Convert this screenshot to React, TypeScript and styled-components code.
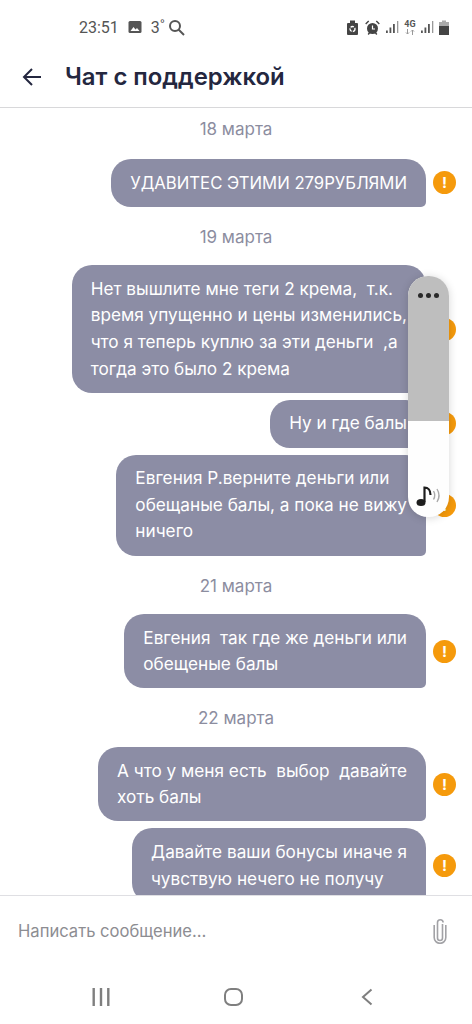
import styled, { createGlobalStyle } from "styled-components";

const GlobalStyle = createGlobalStyle`
  html, body {
    margin: 0;
    padding: 0;
    background: #fff;
    font-family: Inter, "Noto Sans", sans-serif;
  }
`;

const Screen = styled.div`
  position: relative;
  width: 472px;
  height: 1024px;
  display: flex;
  flex-direction: column;
  overflow: hidden;
  background: #fff;
`;

const StatusBar = styled.div`
  height: 54px;
  flex: none;
  display: flex;
  align-items: center;
  justify-content: space-between;
  padding: 0 23px 0 79px;
  color: #555;
`;

const StatusGroup = styled.div`
  display: flex;
  align-items: center;
`;

const Clock = styled.span`
  font-family: Roboto, sans-serif;
  font-size: 16px;
  margin-right: 9px;
`;

const Temp = styled.span`
  font-family: Roboto, sans-serif;
  font-size: 16px;
  margin: 0 3px 0 9px;
`;

const NetworkType = styled.div`
  width: 10px;
  display: flex;
  flex-direction: column;
  align-items: center;
  margin: 0 6px;
  font-family: Roboto, sans-serif;
  font-size: 9px;
  font-weight: 700;
  line-height: 9px;
  color: #555;
`;

const Header = styled.header`
  height: 54px;
  flex: none;
  display: flex;
  align-items: center;
  padding: 0 0 8px 22px;
  box-sizing: border-box;
  border-bottom: 1px solid #d8d8da;
`;

const BackButton = styled.div`
  width: 21px;
  height: 20px;
  margin-right: 22px;
  color: #24273f;
`;

const Title = styled.h1`
  margin: 0;
  font-size: 23.9px;
  font-weight: 600;
  color: #24273f;
`;

const Messages = styled.div`
  flex: 1;
  min-height: 0;
  overflow: hidden;
  display: flex;
  flex-direction: column;
`;

const DateLabel = styled.div`
  flex: none;
  height: 18px;
  line-height: 18px;
  padding: 14px 0 19.5px;
  text-align: center;
  font-size: 17px;
  color: #8c8d9f;

  &:first-child {
    padding: 12px 0 21px;
  }
`;

const Row = styled.div`
  flex: none;
  display: flex;
  justify-content: flex-end;
  align-items: center;
  gap: 7px;
  padding-right: 16px;
  margin-bottom: 7px;
`;

const Bubble = styled.div<{ $caps?: boolean }>`
  box-sizing: border-box;
  background: #8c8da5;
  color: #fff;
  font-size: ${(props) => (props.$caps ? "16.7px" : "17.2px")};
  line-height: 26.6px;
  padding: 10.6px 19px;
  border-radius: 20px 20px 5px 20px;
  white-space: pre;
`;

const WarningIcon = styled.div`
  width: 23px;
  height: 23px;
  flex: none;
  border-radius: 50%;
  background: #f59a0c;
  color: #fff;
  display: flex;
  align-items: center;
  justify-content: center;
  font-size: 15px;
  font-weight: 700;
`;

const Composer = styled.div`
  height: 70px;
  flex: none;
  box-sizing: border-box;
  display: flex;
  align-items: center;
  justify-content: space-between;
  padding: 1px 25px 0 18px;
  border-top: 1px solid #dfdfe3;
  background: #fff;
`;

const Placeholder = styled.span`
  font-size: 16.6px;
  color: #8d8d92;
`;

const NavBar = styled.nav`
  height: 59px;
  flex: none;
  display: grid;
  grid-template-columns: repeat(3, 133px);
  justify-items: center;
  align-items: center;
  padding: 5px 0 0 34px;
  box-sizing: border-box;
  color: #7f7f7f;
`;

const VolumePanel = styled.div`
  position: absolute;
  left: 408px;
  top: 276px;
  width: 41px;
  height: 241px;
  border-radius: 20px;
  overflow: hidden;
  background: #fefefe;
  box-shadow: 0 1px 8px rgba(0, 0, 0, 0.16);
  display: flex;
  flex-direction: column;
`;

const VolumeLevel = styled.div`
  height: 145px;
  flex: none;
  background: #bebebe;
  display: flex;
  justify-content: center;
  padding-top: 17px;
  box-sizing: border-box;
  gap: 3px;
`;

const Dot = styled.span`
  width: 5px;
  height: 5px;
  border-radius: 50%;
  background: #2a2a2a;
`;

const VolumeBottom = styled.div`
  flex: 1;
  display: flex;
  align-items: flex-end;
  justify-content: center;
  padding-bottom: 10px;
`;

type MessageItem = { date: string } | { text: string; caps?: boolean };

const items: MessageItem[] = [
  { date: "18 марта" },
  { text: "УДАВИТЕС ЭТИМИ 279РУБЛЯМИ", caps: true },
  { date: "19 марта" },
  {
    text: "Нет вышлите мне теги 2 крема,  т.к.\nвремя упущенно и цены изменились,\nчто я теперь куплю за эти деньги  ,а\nтогда это было 2 крема",
  },
  { text: "Ну и где балы" },
  { text: "Евгения Р.верните деньги или\nобещаные балы, а пока не вижу\nничего" },
  { date: "21 марта" },
  { text: "Евгения  так где же деньги или\nобещеные балы" },
  { date: "22 марта" },
  { text: "А что у меня есть  выбор  давайте\nхоть балы" },
  { text: "Давайте ваши бонусы иначе я\nчувствую нечего не получу" },
];

function SignalIcon() {
  return (
    <svg width="13" height="14" viewBox="0 0 13 14">
      <rect x="0" y="10.500" width="1.800" height="2.500" fill="#555" />
      <rect x="3.500" y="7.500" width="1.800" height="5.500" fill="#555" />
      <rect x="7" y="4" width="1.800" height="9" fill="#555" />
      <rect x="11" y="1" width="1.300" height="12" fill="#999" />
    </svg>
  );
}

function App() {
  return (
    <Screen>
      <GlobalStyle />
      <StatusBar>
        <StatusGroup>
          <Clock>23:51</Clock>
          <svg width="14" height="14" viewBox="0 0 14 14">
            <rect x="0.5" y="1" width="13" height="12" rx="1.500" fill="#555" />
            <path d="M2.500 11l3-4 2 2.500 1.500-1.500 2.500 3z" fill="#fff" />
          </svg>
          <Temp>3˚</Temp>
          <svg width="17" height="17" viewBox="0 0 17 17" fill="none" stroke="#555" strokeWidth="2">
            <circle cx="7" cy="7" r="5" />
            <path d="M10.500 10.500L16 16" />
          </svg>
        </StatusGroup>
        <StatusGroup>
          <svg width="11" height="15" viewBox="0 0 11 15" style={{ marginRight: 7 }}>
            <path d="M3 0.500h5v2.500h2a1 1 0 0 1 1 1v10a1 1 0 0 1-1 1H1a1 1 0 0 1-1-1V4a1 1 0 0 1 1-1h2z" fill="#444" />
            <circle cx="5.500" cy="9" r="2.500" fill="none" stroke="#fff" strokeWidth="1.300" strokeDasharray="3.500 1.200" />
          </svg>
          <svg width="15" height="15" viewBox="0 0 15 15" style={{ marginRight: 6 }}>
            <circle cx="7.500" cy="8.500" r="5.500" fill="#444" />
            <path d="M0.700 4l3-3M14.300 4l-3-3M3.200 14.500l1.500-2M11.800 14.500l-1.500-2" stroke="#444" strokeWidth="1.400" />
            <path d="M7.500 5.500v3.500h2.500" stroke="#fff" strokeWidth="1.200" fill="none" />
          </svg>
          <SignalIcon />
          <NetworkType>
            4G
            <svg width="10" height="6" viewBox="0 0 10 6" fill="none" stroke="#999" strokeWidth="1">
              <path d="M2.500 0v5M1 3.500L2.500 5 4 3.500M7.500 6V1M6 2.500L7.500 1 9 2.500" />
            </svg>
          </NetworkType>
          <SignalIcon />
          <svg width="10" height="15" viewBox="0 0 10 15" style={{ marginLeft: 5 }}>
            <path d="M3 0.500h4V2h3v13H0V2h3z" fill="#aaa" />
            <rect x="0" y="6" width="10" height="9" fill="#444" />
          </svg>
        </StatusGroup>
      </StatusBar>

      <Header>
        <BackButton>
          <svg width="21" height="20" viewBox="0 0 21 20" fill="none" stroke="currentColor" strokeWidth="2">
            <path d="M19 10H2M10 2l-8 8 8 8" />
          </svg>
        </BackButton>
        <Title>Чат с поддержкой</Title>
      </Header>

      <Messages>
        {items.map((item, i) =>
          "date" in item ? (
            <DateLabel key={i}>{item.date}</DateLabel>
          ) : (
            <Row key={i}>
              <Bubble $caps={item.caps}>{item.text}</Bubble>
              <WarningIcon>!</WarningIcon>
            </Row>
          ),
        )}
      </Messages>

      <Composer>
        <Placeholder>Написать сообщение…</Placeholder>
        <svg width="14" height="26" viewBox="0 0 14 26" fill="none" stroke="#a2a2a6" strokeWidth="1.600">
          <path d="M9.500 6v14a2.500 2.500 0 0 1-5 0V4.500a2.800 2.800 0 0 1 5.600 0M12.800 7v12.500a5.800 5.800 0 0 1-11.600 0V7" />
        </svg>
      </Composer>

      <NavBar>
        <svg width="18" height="18" viewBox="0 0 18 18" fill="#7f7f7f">
          <rect x="0.500" y="0" width="2.400" height="18" />
          <rect x="7.800" y="0" width="2.400" height="18" />
          <rect x="15.100" y="0" width="2.400" height="18" />
        </svg>
        <svg width="19" height="18" viewBox="0 0 19 18" fill="none" stroke="currentColor" strokeWidth="2">
          <rect x="1" y="1" width="17" height="16" rx="6" />
        </svg>
        <svg width="12" height="18" viewBox="0 0 12 18" fill="none" stroke="currentColor" strokeWidth="2">
          <path d="M10.500 1.500L2 9l8.500 7.500" />
        </svg>
      </NavBar>

      <VolumePanel>
        <VolumeLevel>
          <Dot />
          <Dot />
          <Dot />
        </VolumeLevel>
        <VolumeBottom>
          <svg width="26" height="22" viewBox="0 0 26 22" fill="none">
            <ellipse cx="5" cy="17.500" rx="4.500" ry="3.600" fill="#1d1d1d" />
            <path d="M8.500 17V2.500c3.500 0 6 3 6 7.500" stroke="#1d1d1d" strokeWidth="2.200" />
            <path d="M17.500 6c1.500 2.500 1.500 6 0 8.500M21 4c2.500 4 2.500 9 0 13" stroke="#aaa" strokeWidth="1.400" />
          </svg>
        </VolumeBottom>
      </VolumePanel>
    </Screen>
  );
}

export default App;
